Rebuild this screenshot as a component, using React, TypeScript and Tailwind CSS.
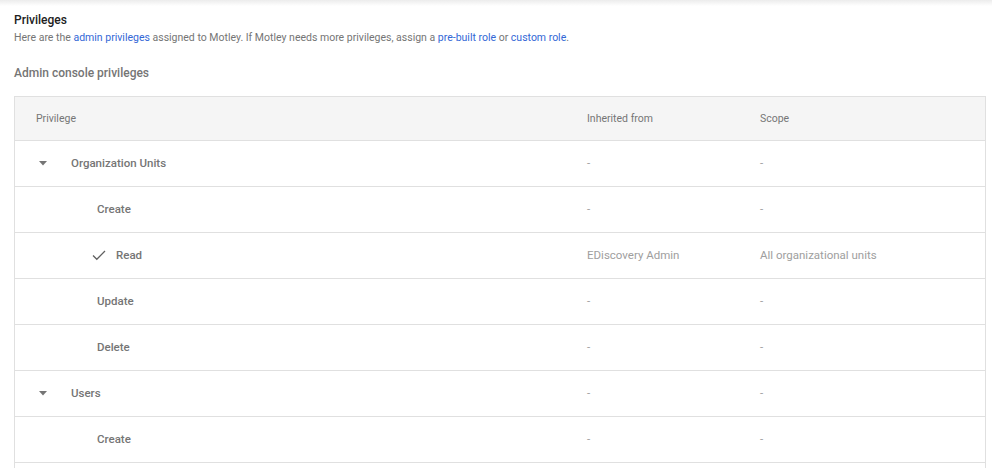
import React from "react";

type Row = {
  name: string;
  level: 0 | 1;
  checked?: boolean;
  inherited: string;
  scope: string;
};

const rows: Row[] = [
  { name: "Organization Units", level: 0, inherited: "-", scope: "-" },
  { name: "Create", level: 1, inherited: "-", scope: "-" },
  {
    name: "Read",
    level: 1,
    checked: true,
    inherited: "EDiscovery Admin",
    scope: "All organizational units",
  },
  { name: "Update", level: 1, inherited: "-", scope: "-" },
  { name: "Delete", level: 1, inherited: "-", scope: "-" },
  { name: "Users", level: 0, inherited: "-", scope: "-" },
  { name: "Create", level: 1, inherited: "-", scope: "-" },
];

const Caret = () => (
  <svg width="8" height="5" viewBox="0 0 8 5" className="shrink-0">
    <path d="M0 0h8L4 4.5z" fill="#757575" />
  </svg>
);

const Check = () => (
  <svg width="14" height="11" viewBox="0 0 14 11" className="shrink-0">
    <path
      d="M1 5.5l3.8 3.8L13 1"
      fill="none"
      stroke="#616161"
      strokeWidth="1.3"
    />
  </svg>
);

export default function App() {
  return (
    <div
      className="w-[992px] h-[468px] overflow-hidden bg-white"
      style={{ fontFamily: "Roboto, 'Noto Sans', sans-serif" }}
    >
      {/* top shadow of the page header */}
      <div className="h-[6px] bg-gradient-to-b from-[#ececec] to-white" />

      <div className="pl-[14px] pr-[6px]">
        <h1 className="mt-[7px] text-[12px] leading-[14px] font-medium text-[#212121]">
          Privileges
        </h1>
        <p className="mt-[5px] text-[10.5px] leading-[12px] text-[#757575]">
          Here are the{" "}
          <a className="text-[#3367d6]">admin privileges</a> assigned to
          Motley. If Motley needs more privileges, assign a{" "}
          <a className="text-[#3367d6]">pre-built role</a> or{" "}
          <a className="text-[#3367d6]">custom role</a>.
        </p>

        <h2 className="mt-[22px] text-[12px] leading-[14px] font-medium text-[#757575]">
          Admin console privileges
        </h2>

        <div className="mt-[16px] border-x border-t border-[#e0e0e0]">
          {/* header */}
          <div className="grid grid-cols-[550px_173px_1fr] h-[44px] items-center bg-[#f5f5f5] border-b border-[#e0e0e0] text-[10.5px] text-[#757575]">
            <div className="pl-[21px]">Privilege</div>
            <div className="pl-[22px]">Inherited from</div>
            <div className="pl-[22px]">Scope</div>
          </div>

          {rows.map((r, i) => (
            <div
              key={i}
              className="grid grid-cols-[550px_173px_1fr] h-[46px] items-center border-b border-[#e0e0e0] text-[11.5px]"
            >
              <div className="flex items-center">
                {r.level === 0 ? (
                  <div className="flex items-center pl-[24px]">
                    <Caret />
                    <span className="ml-[24px] font-medium text-[#757575]">
                      {r.name}
                    </span>
                  </div>
                ) : r.checked ? (
                  <div className="flex items-center pl-[77px]">
                    <Check />
                    <span className="ml-[10px] font-medium text-[#757575]">
                      {r.name}
                    </span>
                  </div>
                ) : (
                  <span className="pl-[82px] font-medium text-[#757575]">
                    {r.name}
                  </span>
                )}
              </div>
              <div className="pl-[22px] text-[#9e9e9e]">{r.inherited}</div>
              <div className="pl-[22px] text-[#9e9e9e]">{r.scope}</div>
            </div>
          ))}
          {/* next row, scrolled below the fold */}
          <div className="h-[46px]" />
        </div>
      </div>
    </div>
  );
}
